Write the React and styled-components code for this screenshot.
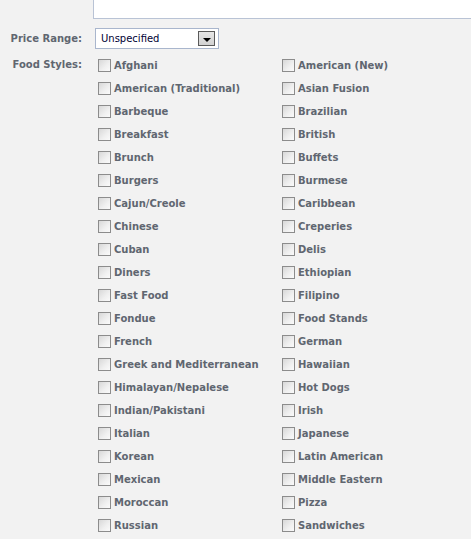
import React from "react";
import styled, { createGlobalStyle } from "styled-components";

const GlobalStyle = createGlobalStyle`
  html, body {
    margin: 0;
    padding: 0;
    background: #f2f2f2;
  }
  body {
    font-family: "DejaVu Sans", Verdana, sans-serif;
  }
`;

const Form = styled.div`
  width: 471px;
  height: 539px;
  overflow: hidden;
  display: flex;
  flex-direction: column;
`;

const Row = styled.div`
  display: flex;
  align-items: ${(p) => (p.$top ? "flex-start" : "center")};
  margin-top: ${(p) => p.$mt || 0}px;
`;

const Label = styled.div`
  width: 82px;
  flex: none;
  text-align: right;
  font-size: 10px;
  font-weight: bold;
  color: #606670;
  padding-top: ${(p) => p.$pt || 0}px;
`;

const TextBox = styled.div`
  margin-left: 11px;
  flex: 1;
  height: 18px;
  background: #fff;
  border: 1px solid #b9c3d5;
  border-top: none;
  border-right: none;
`;

const Select = styled.div`
  margin-left: 13px;
  width: 114px;
  height: 19px;
  background: #fff;
  border: 1px solid #a9b6cd;
  display: flex;
  align-items: center;
  justify-content: space-between;
  padding: 0 3px 0 5px;
  box-sizing: content-box;
  font-size: 10px;
  color: #000033;
`;

const DropButton = styled.div`
  width: 15px;
  height: 13px;
  border: 1px solid #5a5a5a;
  background: linear-gradient(#e6e6e6, #d2d2d2);
  display: flex;
  align-items: center;
  justify-content: center;
`;

const Arrow = styled.div`
  width: 0;
  height: 0;
  border-left: 4px solid transparent;
  border-right: 4px solid transparent;
  border-top: 4px solid #000;
  margin-top: 2px;
`;

const Grid = styled.div`
  margin-left: 16px;
  display: grid;
  grid-template-columns: 184px 184px;
  grid-auto-rows: 23px;
`;

const Option = styled.label`
  display: flex;
  align-items: center;
  gap: 3px;
  font-size: 10px;
  font-weight: bold;
  color: #606670;
  white-space: nowrap;
`;

const Box = styled.span`
  width: 11px;
  height: 11px;
  flex: none;
  border: 1px solid #8c8c8c;
  background: linear-gradient(135deg, #d8d8d8 0%, #f0f0f0 60%, #fafafa 100%);
`;

const styles = [
  ["Afghani", "American (New)"],
  ["American (Traditional)", "Asian Fusion"],
  ["Barbeque", "Brazilian"],
  ["Breakfast", "British"],
  ["Brunch", "Buffets"],
  ["Burgers", "Burmese"],
  ["Cajun/Creole", "Caribbean"],
  ["Chinese", "Creperies"],
  ["Cuban", "Delis"],
  ["Diners", "Ethiopian"],
  ["Fast Food", "Filipino"],
  ["Fondue", "Food Stands"],
  ["French", "German"],
  ["Greek and Mediterranean", "Hawaiian"],
  ["Himalayan/Nepalese", "Hot Dogs"],
  ["Indian/Pakistani", "Irish"],
  ["Italian", "Japanese"],
  ["Korean", "Latin American"],
  ["Mexican", "Middle Eastern"],
  ["Moroccan", "Pizza"],
  ["Russian", "Sandwiches"],
];

export default function App() {
  return (
    <>
      <GlobalStyle />
      <Form>
        <Row>
          <Label />
          <TextBox />
        </Row>
        <Row $mt={9}>
          <Label>Price Range:</Label>
          <Select>
            <span>Unspecified</span>
            <DropButton>
              <Arrow />
            </DropButton>
          </Select>
        </Row>
        <Row $top $mt={5}>
          <Label $pt={5}>Food Styles:</Label>
          <Grid>
            {styles.flat().map((name) => (
              <Option key={name}>
                <Box />
                {name}
              </Option>
            ))}
          </Grid>
        </Row>
      </Form>
    </>
  );
}
